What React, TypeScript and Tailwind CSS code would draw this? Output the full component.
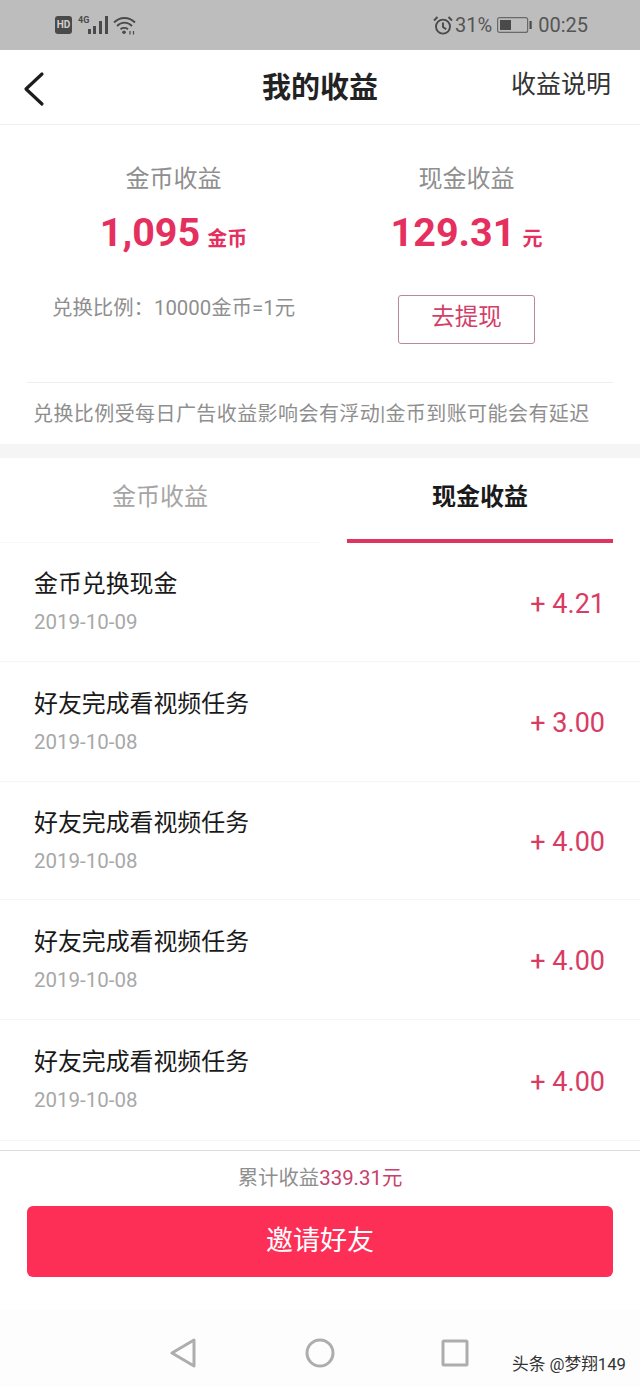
const FONT = "font-['Roboto','Noto_Sans_CJK_SC',sans-serif]";

const records = [
  { title: '金币兑换现金', date: '2019-10-09', amount: '+ 4.21', h: 'h-[119px]' },
  { title: '好友完成看视频任务', date: '2019-10-08', amount: '+ 3.00', h: 'h-[120px]' },
  { title: '好友完成看视频任务', date: '2019-10-08', amount: '+ 4.00', h: 'h-[118px]' },
  { title: '好友完成看视频任务', date: '2019-10-08', amount: '+ 4.00', h: 'h-[120px]' },
  { title: '好友完成看视频任务', date: '2019-10-08', amount: '+ 4.00', h: 'h-[121px]' },
];

function StatusBar() {
  return (
    <div className="h-[50px] shrink-0 bg-[#bdbdbd] flex items-center justify-between pl-[55px] pr-[52px] text-[#555555]">
      <div className="flex items-center">
        <span className="w-[17px] h-[18px] bg-[#4a4a4a] rounded-[3px] text-[#d0d0d0] text-[10px] font-bold leading-[18px] text-center">HD</span>
        <svg width="31" height="20" viewBox="0 0 31 20" fill="#4a4a4a" className="ml-[6px]">
          <text x="0" y="8" fontSize="9" fontWeight="700" fontFamily="Roboto">4G</text>
          <rect x="10" y="14" width="3" height="5" />
          <rect x="15" y="11" width="3" height="8" />
          <rect x="21" y="6" width="3" height="13" />
          <rect x="27" y="1" width="3" height="18" />
        </svg>
        <svg width="23" height="19" viewBox="0 0 23 19" fill="none" stroke="#4a4a4a" strokeWidth="1.8" className="ml-[4px]">
          <path d="M1 6.5C7 0.5 16 0.5 22 6.5" />
          <path d="M4 10C8.5 5.5 14.5 5.5 19 10" />
          <path d="M7.5 13.2C9.5 11.5 13 11.5 15 13.2" />
          <circle cx="11" cy="16.2" r="1.8" fill="#4a4a4a" stroke="none" />
          <path d="M17 15v3.5M20.5 15v3.5" strokeWidth="1.2" />
        </svg>
      </div>
      <div className="flex items-center text-[20px] leading-[28px]">
        <svg width="20" height="19" viewBox="0 0 20 19" fill="none" stroke="#4a4a4a" strokeWidth="1.9" className="mr-[2px]">
          <circle cx="10" cy="10.6" r="7" />
          <path d="M10 6.5v4.4l3.2 2.4" />
          <path d="M1 4.5L4.5 1M19 4.5L15.5 1" />
        </svg>
        <span>31%</span>
        <svg width="35" height="16" viewBox="0 0 35 16" fill="none" className="ml-[5px] mr-[6px]">
          <rect x="0.6" y="0.6" width="30" height="14.8" rx="2" stroke="#6a6a6a" strokeWidth="1.2" />
          <rect x="3" y="3" width="11" height="10" fill="#4a4a4a" />
          <rect x="32.5" y="4" width="2.2" height="8" fill="#4a4a4a" />
        </svg>
        <span>00:25</span>
      </div>
    </div>
  );
}

function SummaryColumn({ label, value, unit }: { label: string; value: string; unit: string }) {
  return (
    <div className="flex flex-col items-center">
      <div className="text-[24px] leading-[32px] text-[#8f8f8f]">{label}</div>
      <div className="mt-[13px] h-[50px] flex items-baseline text-[#e5305f] font-bold">
        <span className="text-[39.5px] leading-[50px]">{value}</span>
        <span className="text-[20px] ml-[7px]">{unit}</span>
      </div>
    </div>
  );
}

function NavBar() {
  return (
    <div className="h-[77px] shrink-0 bg-[#fdfdfd] pt-[28px] pl-[169px] flex items-start">
      <svg width="28" height="30" viewBox="0 0 28 30" fill="none" stroke="#adadad" strokeWidth="3" strokeLinejoin="round">
        <path d="M25 2L3 15L25 28Z" />
      </svg>
      <svg width="30" height="30" viewBox="0 0 30 30" fill="none" stroke="#adadad" strokeWidth="3" className="ml-[108px]">
        <circle cx="15" cy="15" r="13" />
      </svg>
      <svg width="28" height="28" viewBox="0 0 28 28" fill="none" stroke="#adadad" strokeWidth="3" strokeLinejoin="round" className="ml-[106px] mt-[1px]">
        <rect x="2" y="2" width="24" height="24" rx="1" />
      </svg>
    </div>
  );
}

export default function App() {
  return (
    <div className={`${FONT} relative w-[640px] h-[1387px] overflow-hidden bg-white flex flex-col`}>
      <StatusBar />

      {/* header */}
      <div className="relative h-[75px] shrink-0 flex items-center justify-center border-b border-[#f0f0f0]">
        <svg width="24" height="36" viewBox="0 0 24 36" fill="none" stroke="#1c1c1c" strokeWidth="3.2" strokeLinecap="round" strokeLinejoin="round" className="absolute left-[22px] top-[21px]">
          <path d="M20 3L4 18L20 33" />
        </svg>
        <div className="text-[29px] leading-[40px] pt-[2px] font-bold text-[#222]">我的收益</div>
        <div className="absolute right-[29px] top-[18px] text-[25px] leading-[34px] text-[#333]">收益说明</div>
      </div>

      {/* summary */}
      <div className="h-[319px] shrink-0 bg-white px-[27px] pt-[38px]">
        <div className="grid grid-cols-2">
          <SummaryColumn label="金币收益" value="1,095" unit="金币" />
          <SummaryColumn label="现金收益" value="129.31" unit="元" />
        </div>
        <div className="grid grid-cols-2 mt-[37px] h-[88px] border-b border-[#eeeeee]">
          <div className="pl-[25px] text-[20.4px] leading-[26px] text-[#8f8f8f] whitespace-nowrap">兑换比例：10000金币=1元</div>
          <div className="w-[137px] h-[49px] mx-auto border border-[#b88a96] rounded-[3px] text-[23.5px] leading-[42px] text-center text-[#d23f68]">去提现</div>
        </div>
        <div className="pl-[6px] pt-[16px] text-[20px] leading-[30px] tracking-[0.42px] text-[#8f8f8f] whitespace-nowrap">兑换比例受每日广告收益影响会有浮动|金币到账可能会有延迟</div>
      </div>

      <div className="h-[14px] shrink-0 bg-[#f5f5f5]" />

      {/* tabs */}
      <div className="h-[85px] shrink-0 grid grid-cols-2">
        <div className="text-[24px] leading-[78px] text-center text-[#a5a5a5] border-b border-[#f8f8f8]">金币收益</div>
        <div className="mx-[27px] text-[24px] leading-[78px] text-center font-bold text-[#1a1a1a] border-b-[4px] border-[#dd3560]">现金收益</div>
      </div>

      {/* list */}
      <div className="flex-1 overflow-hidden">
        {records.map((r, i) => (
          <div key={i} className={`${r.h} flex items-center justify-between pl-[34px] pr-[35px] border-b border-[#f6f6f6]`}>
            <div className="pb-[1px]">
              <div className="text-[23.9px] leading-[34px] text-[#1a1a1a]">{r.title}</div>
              <div className="mt-[7px] text-[20.5px] leading-[28px] text-[#a8a8a8]">{r.date}</div>
            </div>
            <div className="pt-[4px] text-[27px] text-[#d83c63]">{r.amount}</div>
          </div>
        ))}
      </div>

      {/* bottom */}
      <div className="h-[160px] shrink-0 bg-white border-t border-[#dddddd]">
        <div className="pt-[12px] text-center text-[20.4px] leading-[30px] text-[#8f8f8f]">
          累计收益<span className="text-[#c8406c]">339.31元</span>
        </div>
        <div className="mx-[27px] mt-[13px] h-[71px] rounded-[6px] bg-[#fe2f57] text-white text-[27px] leading-[71px] text-center">邀请好友</div>
      </div>

      <NavBar />
      <div className="absolute right-[14px] bottom-[10px] text-[16.7px] leading-[24px] text-[#333] [text-shadow:0_0_2px_#fff]">头条 @梦翔149</div>
    </div>
  );
}
